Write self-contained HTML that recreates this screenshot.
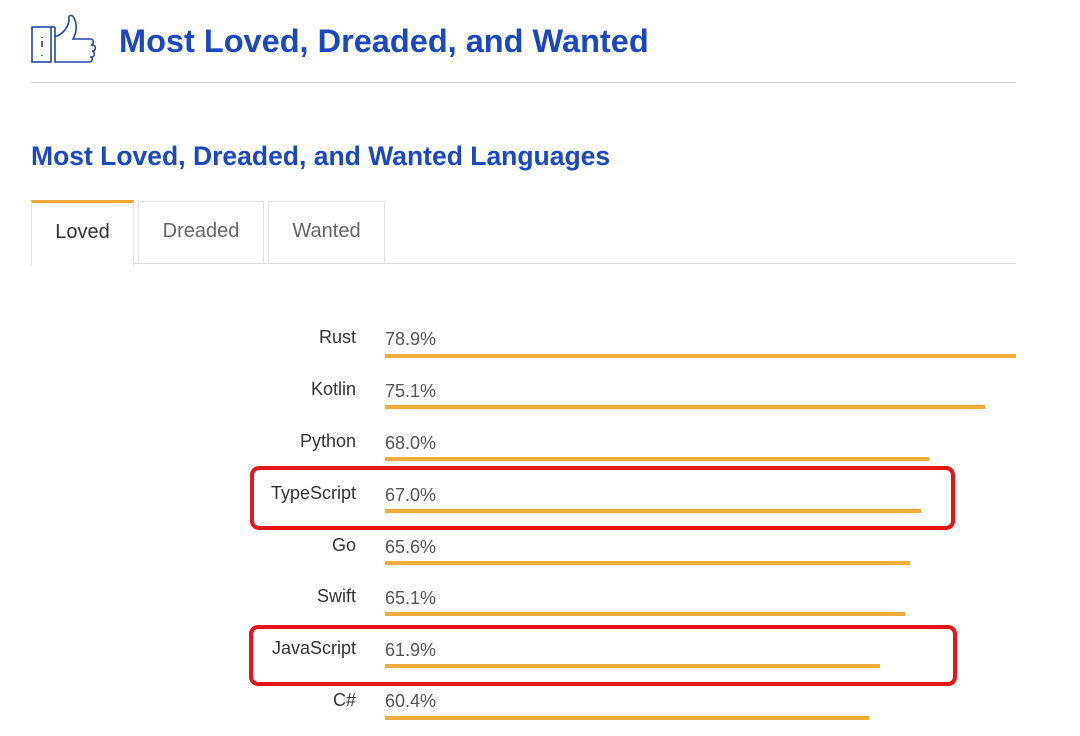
<!DOCTYPE html>
<html><head><style>
body{margin:0;width:1080px;height:736px;background:#fff;font-family:"Liberation Sans",Arial,sans-serif;position:relative;overflow:hidden}
.a{position:absolute}
h1{position:absolute;left:119px;top:23px;margin:0;font-size:32.5px;color:#1c48bf;font-weight:bold}
h2{position:absolute;left:31px;top:141px;margin:0;font-size:26.5px;color:#1c48bf;font-weight:bold}
.tab{position:absolute;top:201px;height:61px;border:1px solid #e2e2e2;border-bottom:none;font-size:20px;color:#666;text-align:center;line-height:58px;background:#fff}
.lbl{position:absolute;right:724px;font-size:18px;color:#333;text-align:right}
.pct{position:absolute;left:385px;font-size:18px;color:#555}
.bar{position:absolute;left:385px;height:4px;background:#f0ad3d}
.box{position:absolute;border:4px solid #e3161b;border-radius:9px}
</style></head><body>
<svg class="a" style="left:30px;top:12px" width="68" height="54" viewBox="0 0 68 54" fill="none" stroke="#2546a6" stroke-width="1.6">
<rect x="2" y="15" width="19" height="35"/><line x1="21" y1="15" x2="25" y2="15"/>
<path d="M25 15 L25 50 L48 50 L60 50 C63 50 63 45 60 45 L62 45 C65 45 65 39 62 39 L63 39 C66 39 66 33 63 33 L61 33 C64 33 64 27 61 27 L43 27 C47 20 47 12 44 6 C42 2 38 3 39 7 C39 14 34 21 27 24 L25 24"/>
<line x1="12" y1="29" x2="12" y2="35"/><line x1="12" y1="43" x2="12" y2="44"/><line x1="12" y1="25" x2="12" y2="26"/>
</svg>
<h1>Most Loved, Dreaded, and Wanted</h1>
<div class="a" style="left:31px;top:82px;width:985px;height:1px;background:#d4d4d4"></div>
<h2>Most Loved, Dreaded, and Wanted Languages</h2>
<div class="a" style="left:31px;top:263px;width:985px;height:1px;background:#ddd"></div>
<div class="tab" style="left:31px;width:101px;border-top:3px solid #f0a636;top:200px;color:#333;line-height:58px;height:63px">Loved</div>
<div class="tab" style="left:138px;width:124px">Dreaded</div>
<div class="tab" style="left:268px;width:115px">Wanted</div>

<div class="lbl" style="top:327px">Rust</div><div class="pct" style="top:329px">78.9%</div><div class="bar" style="top:354px;width:631px"></div>
<div class="lbl" style="top:379px">Kotlin</div><div class="pct" style="top:381px">75.1%</div><div class="bar" style="top:405px;width:600px"></div>
<div class="lbl" style="top:431px">Python</div><div class="pct" style="top:433px">68.0%</div><div class="bar" style="top:457px;width:544px"></div>
<div class="lbl" style="top:483px">TypeScript</div><div class="pct" style="top:485px">67.0%</div><div class="bar" style="top:509px;width:536px"></div>
<div class="lbl" style="top:535px">Go</div><div class="pct" style="top:537px">65.6%</div><div class="bar" style="top:561px;width:525px"></div>
<div class="lbl" style="top:586px">Swift</div><div class="pct" style="top:588px">65.1%</div><div class="bar" style="top:612px;width:520px"></div>
<div class="lbl" style="top:638px">JavaScript</div><div class="pct" style="top:640px">61.9%</div><div class="bar" style="top:664px;width:495px"></div>
<div class="lbl" style="top:690px">C#</div><div class="pct" style="top:691px">60.4%</div><div class="bar" style="top:716px;width:484px"></div>

<div class="box" style="left:250px;top:466px;width:697px;height:56px"></div>
<div class="box" style="left:249px;top:625px;width:700px;height:53px"></div>
</body></html>
